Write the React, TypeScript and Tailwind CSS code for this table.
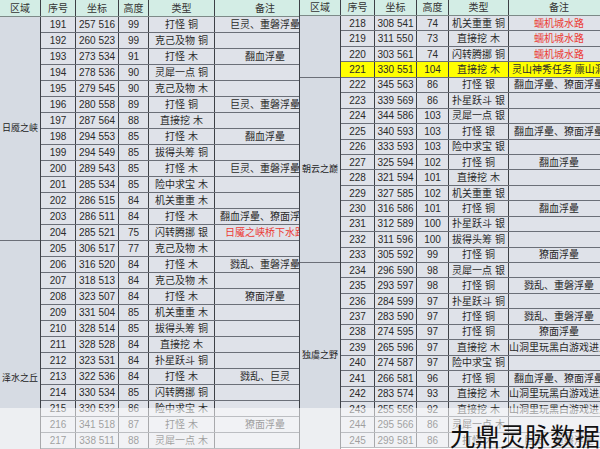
import React from "react";

type Row = [number, string, number, string, string, boolean?];

const leftRows: Row[] = [
  [191, "257 516", 99, "打怪 铜", "巨灵、重磐浮曐"],
  [192, "260 523", 99, "克己及物 铜", ""],
  [193, "273 534", 91, "打怪 木", "翻血浮曐"],
  [194, "278 536", 90, "灵犀一点 铜", ""],
  [195, "279 545", 90, "克己及物 木", ""],
  [196, "280 558", 89, "打怪 铜", "巨灵、重磐浮曐"],
  [197, "287 564", 88, "直接挖 木", ""],
  [198, "294 553", 85, "打怪 木", "翻血浮曐"],
  [199, "294 549", 85, "拔得头筹 铜", ""],
  [200, "289 543", 85, "打怪 木", "巨灵、重磐浮曐"],
  [201, "285 534", 85, "险中求宝 木", ""],
  [202, "286 515", 84, "机关重重 木", ""],
  [203, "286 511", 84, "打怪 木", "翻血浮曐、獠面浮曐"],
  [204, "285 521", 75, "闪转腾挪 银", "日魇之峡桥下水路", true],
  [205, "306 517", 77, "克己及物 木", ""],
  [206, "316 520", 84, "打怪 木", "戮乱、重磐浮曐"],
  [207, "318 513", 84, "克己及物 木", ""],
  [208, "323 507", 84, "打怪 木", "獠面浮曐"],
  [209, "331 504", 85, "机关重重 木", ""],
  [210, "328 514", 85, "拔得头筹 铜", ""],
  [211, "328 528", 84, "直接挖 木", ""],
  [212, "323 531", 84, "扑星跃斗 铜", ""],
  [213, "322 536", 84, "打怪 木", "戮乱、巨灵"],
  [214, "330 534", 85, "闪转腾挪 铜", ""],
  [215, "330 532", 86, "险中求宝 木", ""],
  [216, "341 518", 87, "打怪 木", "獠面浮曐"],
  [217, "338 511", 88, "灵犀一点 木", ""],
];

const rightRows: Row[] = [
  [218, "308 541", 74, "机关重重 铜", "蠕机城水路", true],
  [219, "311 550", 73, "直接挖 木", "蠕机城水路", true],
  [220, "303 561", 74, "闪转腾挪 铜", "蠕机城水路", true],
  [221, "330 551", 104, "直接挖 木", "灵山神秀任务 廪山洞窟"],
  [222, "345 563", 86, "打怪 银", "翻血浮曐、獠面浮曐"],
  [223, "339 569", 86, "扑星跃斗 银", ""],
  [224, "344 586", 103, "灵犀一点 银", ""],
  [225, "340 593", 103, "打怪 银", "翻血浮曐、獠面浮曐"],
  [226, "333 593", 103, "险中求宝 银", ""],
  [227, "325 594", 102, "打怪 铜", "翻血浮曐"],
  [228, "321 594", 101, "直接挖 木", ""],
  [229, "327 585", 102, "机关重重 银", ""],
  [230, "316 586", 101, "打怪 铜", "翻血浮曐"],
  [231, "312 589", 100, "扑星跃斗 银", ""],
  [232, "311 596", 100, "拔得头筹 铜", ""],
  [233, "305 592", 99, "打怪 铜", "獠面浮曐"],
  [234, "296 590", 98, "灵犀一点 银", ""],
  [235, "293 597", 98, "打怪 铜", "戮乱、重磐浮曐"],
  [236, "284 599", 97, "扑星跃斗 铜", ""],
  [237, "283 590", 97, "打怪 铜", "戮乱、重磐浮曐"],
  [238, "274 595", 97, "打怪 铜", "獠面浮曐"],
  [239, "265 596", 97, "直接挖 木", "山洞里玩黑白游戏进入"],
  [240, "274 587", 97, "险中求宝 铜", ""],
  [241, "266 581", 96, "打怪 铜", "翻血浮曐、獠面浮曐"],
  [242, "283 574", 93, "直接挖 木", "山洞里玩黑白游戏进入"],
  [243, "255 556", 92, "直接挖 木", "山洞里玩黑白游戏进入"],
  [244, "295 566", 86, "灵犀一点 木", ""],
  [245, "299 581", 86, "打怪 木", "巨灵、重磐浮曐"],
];

const font = "font-['Liberation_Sans','Noto_Sans_CJK_SC',sans-serif]";

const LeftTable = () => (
  <div className="w-[300px] h-full overflow-hidden shrink-0 border-r border-[#3d4046]">
    <div className="flex h-[17px] bg-[#d3ede5] border-b border-[#7d8a88] text-[10px] text-[#333]">
      <div className="w-[41px] shrink-0 flex items-center justify-center border-r border-[#3d4046]">区域</div>
      <div className="w-[35px] shrink-0 flex items-center justify-center border-r border-[#3d4046]">序号</div>
      <div className="w-[43px] shrink-0 flex items-center justify-center border-r border-[#3d4046]">坐标</div>
      <div className="w-[30px] shrink-0 flex items-center justify-center border-r border-[#3d4046]">高度</div>
      <div className="w-[66px] shrink-0 flex items-center justify-center border-r border-[#3d4046]">类型</div>
      <div className="w-[100px] shrink-0 flex items-center justify-center">备注</div>
    </div>
    <div className="flex">
      <div className="w-[41px] shrink-0 flex flex-col bg-[#d6dbe3] border-r border-[#3d4046] text-[9px] text-[#222] whitespace-nowrap">
        <div className="h-[224px] border-b border-[#6b6f78] flex items-center justify-center">日魇之峡</div>
        <div className="h-[208px] pt-[131px] flex justify-center">泽水之丘</div>
      </div>
      <div className="flex flex-col">
        {leftRows.map((r) => (
          <div key={r[0]} className="flex h-[16px] border-b border-[#6b6f78] bg-[#dfe2e9] text-[10px] text-[#2a2a2a] whitespace-nowrap">
            <div className="w-[35px] shrink-0 flex items-center justify-center border-r border-[#3d4046]">{r[0]}</div>
            <div className="w-[43px] shrink-0 flex items-center justify-center border-r border-[#3d4046]">{r[1]}</div>
            <div className="w-[30px] shrink-0 flex items-center justify-center border-r border-[#3d4046]">{r[2]}</div>
            <div className="w-[66px] shrink-0 flex items-center justify-center border-r border-[#3d4046]">{r[3]}</div>
            <div className={`w-[100px] shrink-0 flex items-center justify-center ${r[5] ? "text-[#ec3b34]" : ""}`}>{r[4]}</div>
          </div>
        ))}
      </div>
    </div>
  </div>
);

const RightTable = () => (
  <div className="w-[300px] h-full overflow-hidden shrink-0">
    <div className="flex h-[16px] bg-[#d3ede5] border-b border-[#7d8a88] text-[10px] text-[#333]">
      <div className="w-[41px] shrink-0 flex items-center justify-center border-r border-[#3d4046]">区域</div>
      <div className="w-[34px] shrink-0 flex items-center justify-center border-r border-[#3d4046]">序号</div>
      <div className="w-[42px] shrink-0 flex items-center justify-center border-r border-[#3d4046]">坐标</div>
      <div className="w-[32px] shrink-0 flex items-center justify-center border-r border-[#3d4046]">高度</div>
      <div className="w-[60px] shrink-0 flex items-center justify-center border-r border-[#3d4046]">类型</div>
      <div className="w-[100px] shrink-0 flex items-center justify-center">备注</div>
    </div>
    <div className="flex">
      <div className="w-[41px] shrink-0 flex flex-col bg-[#d6dbe3] border-r border-[#3d4046] text-[9px] text-[#222] whitespace-nowrap">
        <div className="h-[61.8px] border-b border-[#6b6f78]"></div>
        <div className="h-[185.4px] border-b border-[#6b6f78] flex items-center justify-center">朝云之巅</div>
        <div className="h-[185.4px] flex items-center justify-center">独虞之野</div>
      </div>
      <div className="flex flex-col">
        {rightRows.map((r) => {
          const hl = r[0] === 221;
          return (
            <div key={r[0]} className={`flex h-[15.45px] border-b border-[#6b6f78] text-[10px] text-[#2a2a2a] whitespace-nowrap ${hl ? "bg-[#ffff00]" : "bg-[#dfe2e9]"}`}>
              <div className="w-[34px] shrink-0 flex items-center justify-center border-r border-[#3d4046]">{r[0]}</div>
              <div className="w-[42px] shrink-0 flex items-center justify-center border-r border-[#3d4046]">{r[1]}</div>
              <div className="w-[32px] shrink-0 flex items-center justify-center border-r border-[#3d4046]">{r[2]}</div>
              <div className="w-[60px] shrink-0 flex items-center justify-center border-r border-[#3d4046]">{r[3]}</div>
              <div className={`w-[100px] shrink-0 flex items-center ${hl ? "justify-start pl-[3px]" : "justify-center"} ${r[5] ? "text-[#ec3b34]" : ""}`}>{r[4]}</div>
            </div>
          );
        })}
      </div>
    </div>
  </div>
);

export default function App() {
  return (
    <div className={`relative w-[600px] h-[449px] overflow-hidden bg-white ${font}`}>
      <div className="flex h-full">
        <LeftTable />
        <RightTable />
      </div>
      <div className="absolute left-0 right-0 bottom-0 h-[41px] bg-white/55"></div>
      <div className="absolute right-0 bottom-[1px] text-[25px] leading-none text-[#111] font-['Noto_Sans_CJK_SC',sans-serif]">
        九鼎灵脉数据
      </div>
    </div>
  );
}
